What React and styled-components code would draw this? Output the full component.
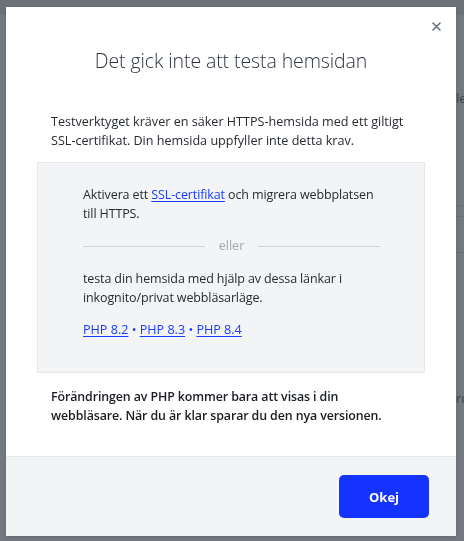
import React from "react";
import styled, { createGlobalStyle } from "styled-components";

const Global = createGlobalStyle`
  html, body { margin: 0; padding: 0; }
  body {
    background: #727780;
    font-family: "Open Sans", "Noto Sans", sans-serif;
    width: 464px;
    height: 541px;
    overflow: hidden;
  }
`;

const Page = styled.div`
  height: 541px;
  display: flex;
  flex-direction: column;
  background: #747880;
`;

const TopBar = styled.div`
  height: 14px;
  background: #6c7077;
  border-bottom: 1px solid #6f737a;
`;

const PageBody = styled.div`
  flex: 1;
  display: flex;
  flex-direction: column;
  align-items: flex-end;
  padding-top: 74px;
  color: #3f434a;
  font-size: 13px;
`;

const GhostText = styled.div`
  margin-top: ${(p) => p.$mt || 0}px;
  width: 8px;
  overflow: hidden;
  white-space: nowrap;
`;

const GhostLine = styled.div`
  width: 8px;
  height: 1px;
  background: #6a6e75;
  margin-top: ${(p) => p.$mt || 0}px;
`;

const Overlay = styled.div`
  position: fixed;
  inset: 0;
  padding: 7px 8px 5px 6px;
`;

const Modal = styled.div`
  width: 450px;
  height: 529px;
  background: #ffffff;
  display: flex;
  flex-direction: column;
  position: relative;
  box-shadow: 0 1px 3px rgba(0, 0, 0, 0.15);
`;

const Close = styled.button`
  position: absolute;
  top: 11px;
  right: 12px;
  width: 16px;
  height: 16px;
  border: 0;
  padding: 0;
  background: none;
  display: flex;
  align-items: center;
  justify-content: center;
  cursor: pointer;
`;

const Content = styled.div`
  flex: 1;
  padding: 0 31px;
  display: flex;
  flex-direction: column;
`;

const Title = styled.h2`
  margin: 40px 0 0;
  text-align: center;
  font-weight: 300;
  font-size: 19.5px;
  line-height: 28px;
  color: #2f3640;
  letter-spacing: -0.1px;
`;

const Text = styled.p`
  margin: ${(p) => p.$m || "0"};
  padding: 0 14px;
  font-size: ${(p) => (p.$bold ? "12.4px" : "12.6px")};
  line-height: 18.5px;
  color: ${(p) => (p.$bold ? "#1a1e23" : "#262b31")};
  font-weight: ${(p) => (p.$bold ? 600 : 400)};
  letter-spacing: ${(p) => (p.$bold ? "-0.1px" : "0")};
`;

const Box = styled.div`
  margin-top: 12px;
  background: #f3f4f6;
  border: 1px solid #e6e8ec;
  padding: 23px 44px 30px 45px;
  display: flex;
  flex-direction: column;
  height: 211px;
  box-sizing: border-box;
`;

const BoxText = styled.p`
  margin: 0;
  font-size: 12.5px;
  line-height: 18.5px;
  letter-spacing: -0.12px;
  color: #262b31;
`;

const Link = styled.a`
  color: #1a3bff;
  text-decoration: underline;
  text-underline-offset: 2px;
`;

const Divider = styled.div`
  display: flex;
  align-items: center;
  gap: 14px;
  margin: 14px 0 15px;
  color: #a3a8b0;
  font-size: 12.6px;
  line-height: 18px;
  &::before,
  &::after {
    content: "";
    flex: 1;
    height: 1px;
    background: #cfd4dc;
  }
`;

const Links = styled.div`
  margin-top: 14px;
  font-size: 12.6px;
  line-height: 18px;
  color: #1a3bff;
`;

const Footer = styled.div`
  height: 80px;
  box-sizing: border-box;
  border-top: 1px solid #e5e7eb;
  background: #f3f4f6;
  display: flex;
  justify-content: flex-end;
  align-items: flex-start;
  padding: 18px 27px 0 0;
`;

const Button = styled.button`
  width: 90px;
  height: 43px;
  border: 0;
  border-radius: 5px;
  background: #1533ff;
  color: #ffffff;
  font-family: inherit;
  font-weight: 700;
  font-size: 13px;
  cursor: pointer;
`;

export default function App() {
  return (
    <>
      <Global />
      <Page>
        <TopBar />
        <PageBody>
          <GhostText>le</GhostText>
          <GhostLine $mt={98} />
          <GhostLine $mt={10} />
          <GhostLine $mt={35} />
          <GhostText $mt={136}>rd</GhostText>
        </PageBody>
      </Page>
      <Overlay>
        <Modal>
          <Close aria-label="Stäng">
            <svg width="9" height="9" viewBox="0 0 9 9">
              <path d="M1 1L8 8M8 1L1 8" stroke="#6b7280" strokeWidth="1.6" strokeLinecap="round" />
            </svg>
          </Close>
          <Content>
            <Title>Det gick inte att testa hemsidan</Title>
            <Text $m="38px 0 0">
              Testverktyget kräver en säker HTTPS-hemsida med ett giltigt SSL-certifikat. Din hemsida uppfyller inte detta krav.
            </Text>
            <Box>
              <BoxText>
                Aktivera ett <Link href="#">SSL-certifikat</Link> och migrera webbplatsen till HTTPS.
              </BoxText>
              <Divider>eller</Divider>
              <BoxText>testa din hemsida med hjälp av dessa länkar i inkognito/privat webbläsarläge.</BoxText>
              <Links>
                <Link href="#">PHP 8.2</Link> • <Link href="#">PHP 8.3</Link> • <Link href="#">PHP 8.4</Link>
              </Links>
            </Box>
            <Text $bold $m="15px 0 0">
              Förändringen av PHP kommer bara att visas i din webbläsare. När du är klar sparar du den nya versionen.
            </Text>
          </Content>
          <Footer>
            <Button>Okej</Button>
          </Footer>
        </Modal>
      </Overlay>
    </>
  );
}
